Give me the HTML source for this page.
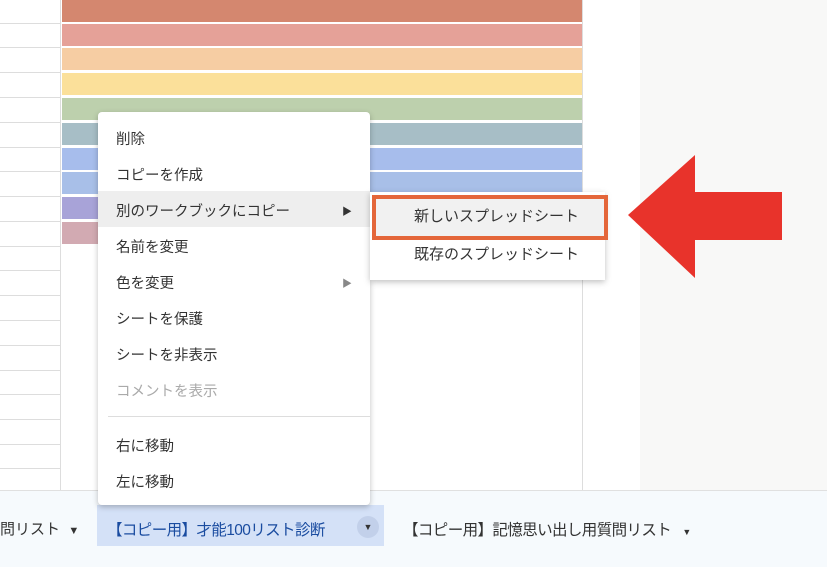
<!DOCTYPE html><html><head><meta charset="utf-8"><style>
body{margin:0;width:827px;height:566px;overflow:hidden;background:#fff;position:relative;font-family:"Liberation Sans","Noto Sans CJK JP",sans-serif;}
.a{position:absolute}
.hl{position:absolute;left:0;width:60px;height:1px;background:#ddd}
.bar{position:absolute;left:62px;width:520px;height:22px}
.menu{position:absolute;left:98px;top:112px;width:272px;height:393px;background:#fff;box-shadow:0 2px 6px rgba(0,0,0,.25);border-radius:4px}
.it{position:absolute;left:18px;font-size:14.5px;color:#333}
</style></head><body>
<div class="a" style="left:640px;top:0;width:187px;height:490px;background:#f8f8f7"></div>
<div class="a" style="left:60px;top:0;width:1px;height:490px;background:#ddd"></div>
<div class="a" style="left:582px;top:0;width:1px;height:490px;background:#ddd"></div>
<div class="hl" style="top:23px"></div><div class="hl" style="top:47px"></div><div class="hl" style="top:72px"></div><div class="hl" style="top:97px"></div><div class="hl" style="top:122px"></div><div class="hl" style="top:147px"></div><div class="hl" style="top:171px"></div><div class="hl" style="top:196px"></div><div class="hl" style="top:221px"></div><div class="hl" style="top:246px"></div><div class="hl" style="top:270px"></div><div class="hl" style="top:295px"></div><div class="hl" style="top:320px"></div><div class="hl" style="top:345px"></div><div class="hl" style="top:370px"></div><div class="hl" style="top:394px"></div><div class="hl" style="top:419px"></div><div class="hl" style="top:444px"></div><div class="hl" style="top:468px"></div>
<div class="bar" style="top:0;background:#d4876f"></div>
<div class="bar" style="top:24px;background:#e5a198"></div>
<div class="bar" style="top:48px;background:#f6cda3"></div>
<div class="bar" style="top:73px;background:#fbe09a"></div>
<div class="bar" style="top:98px;background:#bdd0ad"></div>
<div class="bar" style="top:123px;background:#a7bec6"></div>
<div class="bar" style="top:148px;background:#a7bdec"></div>
<div class="bar" style="top:172px;background:#a8bfe8"></div>
<div class="bar" style="top:197px;background:#a8a3d8"></div>
<div class="bar" style="top:222px;background:#d2aab2"></div>
<div class="a" style="left:0;top:490px;width:827px;height:76px;background:#f6fafd;border-top:1px solid #e0e0e0"></div>
<div class="a" style="left:97px;top:505px;width:287px;height:41px;background:#d4e1f7"></div>
<div class="a" style="left:0;top:518px;font-size:15px;color:#333">問リスト&nbsp;&nbsp;<span style="font-size:11px">▼</span></div>
<div class="a" style="left:107px;top:518px;font-size:15.5px;color:#1a4ca0;white-space:nowrap;letter-spacing:-0.6px">【コピー用】才能100リスト診断</div>
<div class="a" style="left:357px;top:516px;width:22px;height:22px;border-radius:50%;background:#c2d0ea;text-align:center;font-size:9px;line-height:22px;color:#333">▼</div>
<div class="a" style="left:403px;top:518px;font-size:15.5px;color:#333;white-space:nowrap;letter-spacing:-0.6px">【コピー用】記憶思い出し用質問リスト&nbsp;&nbsp;&nbsp;<span style="font-size:9px">▼</span></div>
<div class="menu">
<div class="a" style="left:0;top:79px;width:272px;height:36px;background:#eee"></div>
<div class="it" style="top:16px">削除</div>
<div class="it" style="top:52px">コピーを作成</div>
<div class="it" style="top:88px">別のワークブックにコピー</div><div class="a" style="left:244px;top:91px;font-size:10px;color:#333">▶</div>
<div class="it" style="top:124px">名前を変更</div>
<div class="it" style="top:160px">色を変更</div><div class="a" style="left:244px;top:163px;font-size:10px;color:#888">▶</div>
<div class="it" style="top:196px">シートを保護</div>
<div class="it" style="top:232px">シートを非表示</div>
<div class="it" style="top:268px;color:#aaa">コメントを表示</div>
<div class="a" style="left:10px;top:304px;width:262px;height:1px;background:#ddd"></div>
<div class="it" style="top:323px">右に移動</div>
<div class="it" style="top:359px">左に移動</div>
</div>
<div class="a" style="left:370px;top:192px;width:235px;height:88px;background:#fff;box-shadow:0 2px 6px rgba(0,0,0,.25)"></div>
<div class="a" style="left:372px;top:195px;width:228px;height:37px;border:4px solid #e4663a;background:#f1f1f1"></div>
<div class="a" style="left:414px;top:205px;font-size:15px;color:#333">新しいスプレッドシート</div>
<div class="a" style="left:414px;top:243px;font-size:15px;color:#333">既存のスプレッドシート</div>
<svg class="a" style="left:620px;top:150px" width="170" height="135"><polygon points="8,65 75,5 75,42 162,42 162,90 75,90 75,128" fill="#e8332b"/></svg>
</body></html>
